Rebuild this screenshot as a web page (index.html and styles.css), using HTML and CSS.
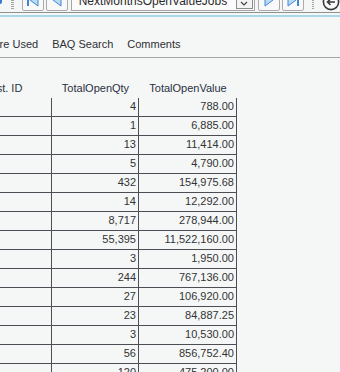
FILE: index.html
```html
<!DOCTYPE html>
<html>
<head>
<meta charset="utf-8">
<link rel="stylesheet" href="styles.css">
</head>
<body>
<div class="toolbar">
  <div class="edge"></div>
  <div class="grip"></div>
  <div class="tbtn"><svg width="16" height="16" viewBox="0 0 16 16"><rect x="2" y="2" width="2" height="12" fill="#3f86d6"/><polygon points="13,2 5,8 13,14" fill="#b9dcf5" stroke="#3f86d6" stroke-width="1"/></svg></div>
  <div class="tbtn"><svg width="16" height="16" viewBox="0 0 16 16"><polygon points="12,2 4,8 12,14" fill="#b9dcf5" stroke="#3f86d6" stroke-width="1"/></svg></div>
  <div class="combo">
    <span class="combo-text">NextMonthsOpenValueJobs</span>
    <span class="combo-drop"><svg width="8" height="6" viewBox="0 0 8 6"><polyline points="1,1 4,4 7,1" fill="none" stroke="#444" stroke-width="1.2"/></svg></span>
  </div>
  <div class="tbtn next"><svg width="16" height="16" viewBox="0 0 16 16"><polygon points="4,2 12,8 4,14" fill="#b9dcf5" stroke="#3f86d6" stroke-width="1"/></svg></div>
  <div class="tbtn last"><svg width="16" height="16" viewBox="0 0 16 16"><polygon points="3,2 11,8 3,14" fill="#b9dcf5" stroke="#3f86d6" stroke-width="1"/><rect x="12" y="2" width="2" height="12" fill="#3f86d6"/></svg></div>
  <div class="grip grip2"></div>
  <div class="circ"><svg width="18" height="18" viewBox="0 0 18 18"><circle cx="9" cy="9" r="7.6" fill="#fbfbfb" stroke="#3a3a3a" stroke-width="1.6"/><path d="M13 9H5.5M8.5 6L5.5 9L8.5 12" fill="none" stroke="#3a3a3a" stroke-width="1.6"/></svg></div>
</div>
<div class="rule-gray"></div>
<div class="rule-blue"></div>
<div class="tabs">
  <span class="tab">Where Used</span>
  <span class="tab">BAQ Search</span>
  <span class="tab">Comments</span>
</div>
<div class="grid">
  <div class="hcell">Cust. ID</div><div class="hcell">TotalOpenQty</div><div class="hcell">TotalOpenValue</div>
  <div class="cell"></div><div class="cell">4</div><div class="cell">788.00</div>
  <div class="cell"></div><div class="cell">1</div><div class="cell">6,885.00</div>
  <div class="cell"></div><div class="cell">13</div><div class="cell">11,414.00</div>
  <div class="cell"></div><div class="cell">5</div><div class="cell">4,790.00</div>
  <div class="cell"></div><div class="cell">432</div><div class="cell">154,975.68</div>
  <div class="cell"></div><div class="cell">14</div><div class="cell">12,292.00</div>
  <div class="cell"></div><div class="cell">8,717</div><div class="cell">278,944.00</div>
  <div class="cell"></div><div class="cell">55,395</div><div class="cell">11,522,160.00</div>
  <div class="cell"></div><div class="cell">3</div><div class="cell">1,950.00</div>
  <div class="cell"></div><div class="cell">244</div><div class="cell">767,136.00</div>
  <div class="cell"></div><div class="cell">27</div><div class="cell">106,920.00</div>
  <div class="cell"></div><div class="cell">23</div><div class="cell">84,887.25</div>
  <div class="cell"></div><div class="cell">3</div><div class="cell">10,530.00</div>
  <div class="cell"></div><div class="cell">56</div><div class="cell">856,752.40</div>
  <div class="cell"></div><div class="cell">120</div><div class="cell">475,200.00</div>
</div>
</body>
</html>
```

FILE: styles.css
```css
html, body {
  margin: 0;
  padding: 0;
}
body {
  width: 340px;
  height: 372px;
  overflow: hidden;
  background: #f5f7f7;
  font-family: "Liberation Sans", Arial, sans-serif;
  font-size: 11px;
  color: #333;
}
.toolbar {
  height: 11px;
  display: flex;
  align-items: flex-end;
  overflow: hidden;
}
.edge {
  align-self: flex-start;
  width: 3px;
  height: 4px;
  background: #3a78d0;
  border-bottom-right-radius: 2px;
}
.grip {
  align-self: flex-start;
  margin-left: 9px;
  width: 3px;
  height: 9px;
  background: repeating-linear-gradient(to bottom, #a4a4a4 0 1px, transparent 1px 2px);
}
.grip2 {
  margin-left: 8px;
}
.tbtn {
  box-sizing: border-box;
  width: 22px;
  height: 22px;
  flex: none;
  border: 1px solid #ababab;
  border-radius: 2px;
  background: #f9f9f9;
  display: flex;
  align-items: center;
  justify-content: center;
  margin-left: 2px;
}
.tbtn:nth-of-type(3) {
  margin-left: 8px;
}
.tbtn.next {
  margin-left: 3px;
}
.combo {
  box-sizing: border-box;
  margin-left: 3px;
  width: 184px;
  height: 22px;
  flex: none;
  border: 1px solid #a6a6a6;
  background: #fbfbfb;
  display: flex;
  align-items: stretch;
}
.combo-text {
  flex: 1;
  padding-left: 7px;
  padding-top: 1px;
  font-size: 12px;
  line-height: 20px;
  color: #2b2b2b;
  white-space: nowrap;
  overflow: hidden;
}
.combo-drop {
  box-sizing: border-box;
  width: 17px;
  margin: 1px;
  border: 1px solid #8c8c8c;
  background: #f4f4f4;
  display: flex;
  align-items: center;
  justify-content: center;
}
.combo-drop svg {
  margin-top: 8px;
}
.circ {
  margin-left: 8px;
  width: 18px;
  height: 18px;
  flex: none;
}
.circ svg {
  display: block;
}
.rule-gray {
  margin-top: 1px;
  height: 1px;
  background: #909090;
}
.rule-blue {
  margin-top: 2px;
  height: 2px;
  background: #a9d8ea;
}
.tabs {
  display: flex;
  gap: 14px;
  margin-left: -23px;
  padding-top: 17px;
  padding-bottom: 3px;
  line-height: 20px;
  border-bottom: 1px solid #a3a3a3;
  color: #2f2f33;
  white-space: nowrap;
}
.grid {
  display: grid;
  grid-template-columns: 99px 87px 98px;
  margin-left: -47px;
  margin-top: 20px;
}
.hcell {
  height: 20px;
  line-height: 20px;
  text-align: center;
  white-space: nowrap;
  color: #2a3040;
}
.cell {
  box-sizing: border-box;
  height: 19px;
  line-height: 16px;
  padding-right: 2px;
  text-align: right;
  white-space: nowrap;
  border-right: 1px solid #4e4d55;
  border-bottom: 1px solid #4e4d55;
  color: #333;
}
```
